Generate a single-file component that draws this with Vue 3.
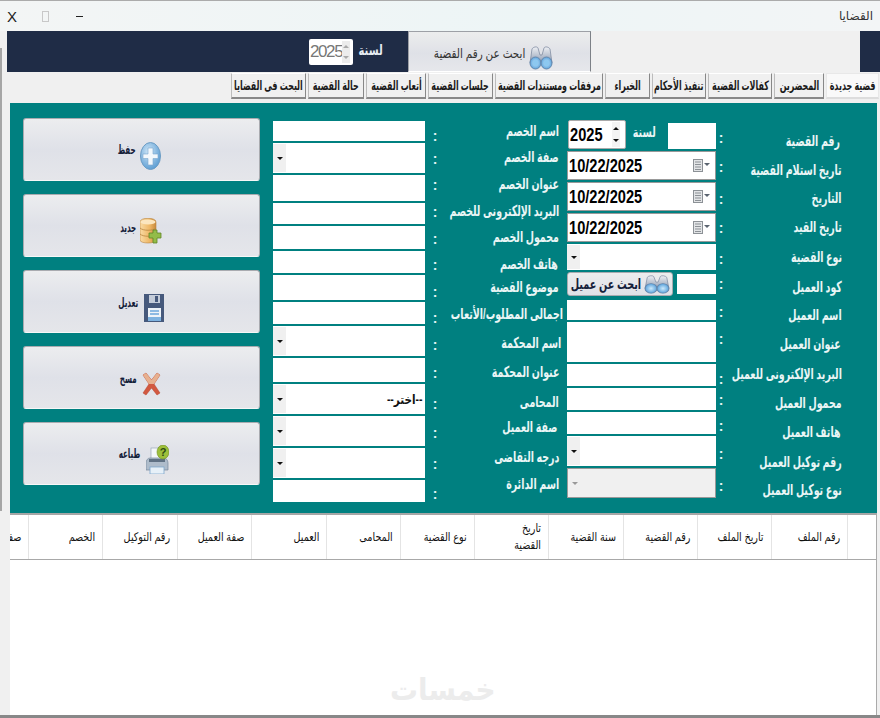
<script setup>
const tabs = [
  { t: 'البحث فى القضايا', w: 75 }, { t: 'حالة القضية', w: 56 }, { t: 'أتعاب القضية', w: 60 },
  { t: 'جلسات القضية', w: 65 }, { t: 'مرفقات ومستندات القضية', w: 108 }, { t: 'الخبراء', w: 45 },
  { t: 'تنفيذ الأحكام', w: 54 }, { t: 'كفالات القضية', w: 64 }, { t: 'المحضرين', w: 50 },
  { t: 'قضية جديدة', w: 53, active: true }
]
const withHeights = (list, end) => list.map((x, i) => ({ ...x, h: (i + 1 < list.length ? list[i + 1].y : end) - x.y }))
const midLabels = withHeights([
  { t: 'اسم الخصم', y: 131 }, { t: 'صفة الخصم', y: 157 }, { t: 'عنوان الخصم', y: 184 },
  { t: 'البريد الإلكترونى للخصم', y: 211 }, { t: 'محمول الخصم', y: 237 }, { t: 'هاتف الخصم', y: 264, r: 1 },
  { t: 'موضوع القضية', y: 287 }, { t: 'اجمالى المطلوب/الأتعاب', y: 314, r: -4 }, { t: 'اسم المحكمة', y: 343, r: -2 },
  { t: 'عنوان المحكمة', y: 372 }, { t: 'المحامى', y: 402 }, { t: 'صفة العميل', y: 427, r: 2 },
  { t: 'درجه التقاضى', y: 457 }, { t: 'اسم الدائرة', y: 484 }
], 504)
const rightLabels = withHeights([
  { t: 'رقم القضية', y: 141, r: 2 }, { t: 'تاريخ استلام القضية', y: 170 }, { t: 'التاريخ', y: 198 },
  { t: 'تاريخ القيد', y: 227 }, { t: 'نوع القضية', y: 257 }, { t: 'كود العميل', y: 287 },
  { t: 'اسم العميل', y: 315 }, { t: 'عنوان العميل', y: 344, r: 1 }, { t: 'البريد الإلكترونى للعميل', y: 374 },
  { t: 'محمول العميل', y: 403 }, { t: 'هاتف العميل', y: 432, r: 1 }, { t: 'رقم توكيل العميل', y: 462 },
  { t: 'نوع توكيل العميل', y: 490 }
], 510)
const midColons = withHeights([134, 157, 183, 210, 237, 263, 290, 316, 343, 371, 402, 431, 462, 492].map(y => ({ y })), 504)
const rightColons = withHeights([136, 165, 197, 226, 257, 282, 310, 337, 377, 398, 424, 452, 484].map(y => ({ y })), 504)
const midFields = [
  { h: 20 }, { h: 30, combo: true }, { h: 26 }, { h: 21 }, { h: 23 }, { h: 22 }, { h: 25 },
  { h: 22 }, { h: 30, combo: true }, { h: 24 }, { h: 30, combo: true, text: '--اختر--' },
  { h: 30, combo: true }, { h: 30, combo: true }, { h: 22 }
]
const cols = [
  { w: 29 }, { w: 76, t: 'رقم الملف' }, { w: 74, t: 'تاريخ الملف' }, { w: 74, t: 'رقم القضية' },
  { w: 75, t: 'سنة القضية' }, { w: 74, t: 'تاريخ القضية', wrap: true }, { w: 74, t: 'نوع القضية' },
  { w: 74, t: 'المحامى' }, { w: 75, t: 'العميل' }, { w: 74, t: 'صفة العميل' }, { w: 75, t: 'رقم التوكيل' },
  { w: 74, t: 'الخصم' }, { w: 74, t: 'صفة العميل' }
]
</script>

<template>
  <div class="win">
    <div class="titlebar">
      <span class="ctl-x">X</span>
      <span class="ctl-sq"></span>
      <span class="ctl-min"></span>
      <span class="title">القضايا</span>
    </div>

    <div class="band">
      <div class="navy navy-main">
        <div class="spin-top">
          <span class="spin-top-val">2025</span>
          <span class="spin-top-btns"><i class="up"></i><i class="down"></i></span>
        </div>
        <span class="year-top"><span class="sq">لسنة</span></span>
      </div>
      <div class="find-btn">
        <span class="find-text"><span class="sq">ابحث عن رقم القضية</span></span>
        <svg class="find-ico" width="24" height="24" viewBox="0 0 24 24">
          <defs>
            <linearGradient id="bn" x1="0" y1="0" x2="0" y2="1"><stop offset="0" stop-color="#eef0f4"/><stop offset="1" stop-color="#8d9ab0"/></linearGradient>
            <radialGradient id="lens"><stop offset="0" stop-color="#cde9fb"/><stop offset="1" stop-color="#5ba3dc"/></radialGradient>
          </defs>
          <path d="M3 3c1-2 5-3 6-1l2 7h2l2-7c1-2 5-1 6 1l2 14H1z" fill="url(#bn)" stroke="#75829a" stroke-width=".7"/>
          <ellipse cx="6.500" cy="17" rx="5.500" ry="6" fill="url(#lens)" stroke="#6487ad"/>
          <ellipse cx="17.500" cy="17" rx="5.500" ry="6" fill="url(#lens)" stroke="#6487ad"/>
          <ellipse cx="6.500" cy="17" rx="2.600" ry="3" fill="#8cc8f0"/>
          <ellipse cx="17.500" cy="17" rx="2.600" ry="3" fill="#8cc8f0"/>
        </svg>
      </div>
      <div class="band-gap"></div>
      <div class="navy navy-end"></div>
    </div>

    <div class="tabs">
      <div v-for="tab in tabs" :key="tab.t" class="tab" :class="{ active: tab.active }" :style="{ width: tab.w + 'px' }">
        <span class="sq sq-c">{{ tab.t }}</span>
      </div>
    </div>

    <div class="panel">
      <div class="actions">
        <div class="act">
          <span class="act-text t31"><span class="sq sqa">حفظ</span></span>
          <svg class="i24" width="21" height="28" viewBox="0 0 21 28">
            <defs><radialGradient id="pl" cx=".4" cy=".35" r=".75"><stop offset="0" stop-color="#cfe6f7"/><stop offset="1" stop-color="#4f95cf"/></radialGradient></defs>
            <ellipse cx="10.500" cy="14" rx="10" ry="13.500" fill="url(#pl)" stroke="#6c9cc4"/>
            <path d="M8 6h5v6h5v4.500h-5V23H8v-6.500H3V12h5z" fill="#f3f8fc" stroke="#7aa6cc" stroke-width=".6"/>
          </svg>
        </div>
        <div class="act">
          <span class="act-text t33"><span class="sq sqa">جديد</span></span>
          <svg class="i24" width="22" height="27" viewBox="0 0 22 27">
            <defs><linearGradient id="db" x1="0" x2="1"><stop offset="0" stop-color="#f9dba4"/><stop offset=".6" stop-color="#eeb766"/><stop offset="1" stop-color="#c98a3c"/></linearGradient></defs>
            <path d="M0 4c0-5 16-5 16 0v18c0 4-16 4-16 0z" fill="url(#db)" stroke="#b9853f" stroke-width=".6"/>
            <path d="M0 10c3 3 13 3 16 0M0 16c3 3 13 3 16 0" fill="none" stroke="#b9853f" stroke-width=".8"/>
            <ellipse cx="8" cy="4" rx="7.500" ry="2.500" fill="#fbe6bf"/>
            <path d="M13 12h4v3h4v5h-4v5h-4v-5H9v-5h4z" fill="#93bc48" stroke="#5f8526" stroke-width=".8"/>
          </svg>
        </div>
        <div class="act">
          <span class="act-text t32 s2"><span class="sq sqa">تعديل</span></span>
          <svg class="i24 shift3" width="20" height="28" viewBox="0 0 20 28">
            <rect width="20" height="28" fill="#46597c"/>
            <rect x="5" y="1" width="11" height="8" fill="#c4ccd9"/>
            <rect x="11" y="2" width="3" height="6" fill="#46597c"/>
            <rect x="4" y="14" width="13" height="13" fill="#eef3f8"/>
            <path d="M6 17h9M6 20h9" stroke="#6ea8db" stroke-width="1.500"/>
            <rect x="4" y="23" width="13" height="4" fill="#7eb2e0"/>
          </svg>
        </div>
        <div class="act">
          <span class="act-text t32 s1"><span class="sq sqa">مسح</span></span>
          <svg class="i24 shift2" width="19" height="24" viewBox="0 0 19 24">
            <path d="M1 3l3-2 5.500 7L15 1l3 2-6 9 6 9-3 2-5.500-7L4 23l-3-2 6-9z" fill="#d2583f" stroke="#b5442e" stroke-width=".5"/>
            <path d="M1 3l3-2 5.500 7L15 1l3 2-6 9H7z" fill="#e7b08f"/>
          </svg>
        </div>
        <div class="act">
          <span class="act-text t31 s4"><span class="sq sqa">طباعه</span></span>
          <svg class="i24 shift3 u1" width="23" height="29" viewBox="0 0 23 29">
            <rect x="5" y="3" width="12" height="12" fill="#f4f7fa" stroke="#9aa8b8" stroke-width=".7"/>
            <path d="M0 18c0-3 2-5 4-5h14c2 0 4 2 4 5v7H0z" fill="#aebccb" stroke="#77889b" stroke-width=".7"/>
            <rect x="3" y="14" width="16" height="3" fill="#5f7184"/>
            <rect x="4" y="22" width="14" height="7" fill="#e6f0f8" stroke="#7fa7cb" stroke-width=".8"/>
            <ellipse cx="17" cy="7" rx="6" ry="7" fill="#9dbf3a" stroke="#6f8f1f" stroke-width=".6"/>
            <text x="17" y="11" font-size="11" font-weight="700" text-anchor="middle" fill="#2c4a12" font-family="Liberation Sans">?</text>
          </svg>
        </div>
      </div>

      <div class="fields mid">
        <div v-for="(f, i) in midFields" :key="i" class="field" :class="{ combo: f.combo }" :style="{ height: f.h + 'px' }">
          <span v-if="f.combo" class="strip"><i class="down dk"></i></span>
          <span v-if="f.text" class="field-text"><span class="sq">{{ f.text }}</span></span>
        </div>
      </div>

      <div class="colons c-mid">
        <div v-for="c in midColons" :key="c.y" class="colon" :style="{ height: c.h + 'px' }">:</div>
      </div>

      <div class="labels l-mid">
        <div v-for="l in midLabels" :key="l.t" class="label" :style="{ height: l.h + 'px', paddingRight: 4 + (l.r || 0) + 'px' }">
          <span class="sq">{{ l.t }}</span>
        </div>
      </div>

      <div class="fields right">
        <div class="f-row r1">
          <div class="spin">
            <span class="big"><span class="sql">2025</span></span>
            <span class="spin-btns"><i class="up dk"></i><i class="down dk"></i></span>
          </div>
          <span class="year"><span class="sq">لسنة</span></span>
          <div class="field caseno"></div>
        </div>
        <div v-for="n in 3" :key="n" class="date">
          <span class="big"><span class="sql">10/22/2025</span></span>
          <svg class="cal" width="17" height="13" viewBox="0 0 17 13">
            <rect x="0.500" y=".5" width="9" height="12" fill="#e2e4e6" stroke="#8c9196"/>
            <path d="M2 3h6M2 5.500h6M2 8h6M2 10.500h6" stroke="#8c9196"/>
            <path d="M11 4h6l-3 3z" fill="#5b6470"/>
          </svg>
        </div>
        <div class="field combo" style="height: 26px"><span class="strip"><i class="down dk"></i></span></div>
        <div class="f-row r6">
          <div class="client-btn">
            <span class="client-text"><span class="sq">ابحث عن عميل</span></span>
            <svg width="26" height="19" viewBox="0 0 24 24" preserveAspectRatio="none">
              <path d="M3 3c1-2 5-3 6-1l2 7h2l2-7c1-2 5-1 6 1l2 14H1z" fill="url(#bn)" stroke="#75829a" stroke-width=".7"/>
              <ellipse cx="6.500" cy="17" rx="5.500" ry="6" fill="url(#lens)" stroke="#6487ad"/>
              <ellipse cx="17.500" cy="17" rx="5.500" ry="6" fill="url(#lens)" stroke="#6487ad"/>
            </svg>
          </div>
          <div class="field code"></div>
        </div>
        <div class="field gapt" style="height: 20px"></div>
        <div class="field" style="height: 40px"></div>
        <div class="field" style="height: 22px"></div>
        <div class="field" style="height: 22px"></div>
        <div class="field" style="height: 22px"></div>
        <div class="field combo" style="height: 30px"><span class="strip"><i class="down dk"></i></span></div>
        <div class="field combo off" style="height: 30px"><span class="strip blank"><i class="down gr"></i></span></div>
      </div>

      <div class="colons c-right">
        <div v-for="c in rightColons" :key="c.y" class="colon" :style="{ height: c.h + 'px' }">:</div>
      </div>

      <div class="labels l-right">
        <div v-for="l in rightLabels" :key="l.t" class="label" :style="{ height: l.h + 'px', paddingRight: 4 + (l.r || 0) + 'px' }">
          <span class="sq">{{ l.t }}</span>
        </div>
      </div>
    </div>

    <div class="grid">
      <div class="grid-head">
        <div v-for="(c, i) in cols" :key="i" class="th" :style="{ width: c.w + 'px' }">
          <span class="sq" :class="{ wrap: c.wrap }">{{ c.t }}</span>
        </div>
      </div>
      <div class="grid-body">
        <span class="mark"><span class="sq sq-c">خمسات</span></span>
      </div>
    </div>
    <div class="foot"></div>
    <div class="edge"></div>
  </div>
</template>

<style>
html, body { margin: 0; padding: 0; background: #f0f0f0; }
</style>

<style scoped>
.win {
  position: relative;
  width: 880px;
  height: 718px;
  overflow: hidden;
  background: #f0f0f0;
  display: flex;
  flex-direction: column;
  font-family: "Liberation Sans", "DejaVu Sans", sans-serif;
  border-top: 1px solid #ababab;
  box-sizing: border-box;
}
.sq { display: inline-block; transform: scaleX(.8); transform-origin: right center; white-space: nowrap; direction: rtl; }
.sql { display: inline-block; transform: scaleX(.77); transform-origin: left center; white-space: nowrap; }
.sqa { transform: scaleX(.55); }

.titlebar {
  height: 30px; flex: none; display: flex; align-items: center; padding-left: 7px;
  background: linear-gradient(90deg, #f3f5f5, #edf5f6 60%, #f3f5f6);
}
.ctl-x { font: 15px "Liberation Sans", sans-serif; color: #222; width: 35px; }
.ctl-sq { width: 5px; height: 9px; border: 1px solid #c8c8c8; margin-right: 27px; }
.ctl-min { width: 7px; height: 1px; background: #222; }
.title { margin-left: auto; margin-right: 7px; font-size: 12px; color: #333; direction: rtl; }

.band { height: 41px; flex: none; display: flex; padding-left: 7px; }
.navy { background: #1f2c46; }
.navy-main { width: 401px; display: flex; align-items: flex-start; padding-top: 8px; padding-left: 302px; box-sizing: border-box; }
.spin-top { width: 44px; height: 26px; background: #fff; border-radius: 2px; display: flex; align-items: center; justify-content: space-between; box-sizing: border-box; padding: 0 3px 0 1px; }
.spin-top-val { font-size: 17px; color: #777; letter-spacing: -1.4px; }
.spin-top-btns { display: flex; flex-direction: column; width: 12px; height: 22px; background: #ececec; align-items: center; justify-content: space-around; }
.year-top { width: 30px; text-align: right; direction: rtl; color: #e6edf3; font-size: 14px; font-weight: 700; padding-top: 3px; }
.year-top .sq { transform: scaleX(.72); }
.find-btn {
  width: 183px; display: flex; box-sizing: border-box; padding: 14px 0 0 39px; gap: 4px; align-items: flex-start;
  background: linear-gradient(#eceded, #dfe1e7 55%, #e6e7eb); border: 1px solid #9da0a6; border-bottom-color: #fff; border-right-color: #7d8187;
}
.find-text { width: 77px; font-size: 13px; text-align: right; direction: rtl; color: #333; }
.band-gap { width: 269px; }
.navy-end { width: 20px; }

.up, .down { display: block; width: 0; height: 0; border-left: 3px solid transparent; border-right: 3px solid transparent; }
.up { border-bottom: 3px solid #aaa; }
.down { border-top: 3px solid #aaa; }
.up.dk { border-bottom-color: #111; }
.down.dk { border-top-color: #111; }
.down.gr { border-top-color: #999; }

.tabs { height: 27px; flex: none; display: flex; justify-content: flex-end; gap: 2px; padding-right: 1px; margin-top: 1px; box-sizing: border-box; }
.tab {
  box-sizing: border-box; height: 26px; display: flex; align-items: center; justify-content: center; direction: rtl; overflow: hidden;
  background: #f0f0f0; border: 1px solid #fff; border-right-color: #888; border-bottom: 2px solid #888; border-left-color: #bcbcbc;
  font-size: 13px; font-weight: 700; color: #1a1a1a;
}
.tab .sq { transform: scaleX(.61); flex: none; }
.sq-c { transform-origin: center; }
.tab.active { background: #f9f9f9; border-color: #e8e8e8; border-bottom-color: #ddd; }

.panel {
  flex: none; margin: 3px 0 0 10px; width: 867px; height: 410px; background: #008080; display: flex;
  border-bottom: 2px solid #a6a6a6; box-sizing: content-box;
}
.actions { width: 237px; margin-left: 13px; padding-top: 15px; display: flex; flex-direction: column; gap: 13px; flex: none; }
.act {
  height: 63px; box-sizing: border-box; display: flex; align-items: flex-start; gap: 4px; padding-top: 23px;
  background: linear-gradient(#ecedef, #dfe1e8 50%, #e5e6ea); border: 1px solid #a9abb0; border-bottom-color: #f7f7f7; border-radius: 3px;
}
.act-text { width: 112px; text-align: right; direction: rtl; font-size: 13px; font-weight: 700; color: #14203a; line-height: 14px; }
.t31 { margin-top: 1px; } .t33 { margin-top: 3px; } .t32 { margin-top: 2px; }
.s1 { width: 113px; } .s2 { width: 114px; } .s4 { width: 116px; }
.shift2 { margin-left: 1px; margin-top: 2px; } .shift3 { margin-left: 2px; } .u1 { margin-top: -1px; }
.i24 { flex: none; }

.fields { display: flex; flex-direction: column; gap: 2px; flex: none; }
.mid { width: 152px; margin-left: 13px; padding-top: 18px; }
.field { background: #fff; position: relative; box-sizing: border-box; flex: none; }
.combo { display: flex; align-items: center; }
.strip { width: 13px; align-self: stretch; margin: 1px 0; background: #f0f0f0; display: flex; align-items: center; justify-content: center; flex: none; }
.strip.blank { background: transparent; }
.field-text { margin-left: auto; margin-right: 2px; font-size: 13px; font-weight: 700; color: #111; direction: rtl; }
.field.off { background: #f0f0f0; border: 1px solid #999; }

.colons { flex: none; text-align: center; color: #e6f3f3; font-weight: 700; font-size: 14px; }
.colon { line-height: 14px; }
.c-mid { width: 10px; margin-left: 5px; padding-top: 26px; }
.c-right { width: 10px; padding-top: 28px; }
.labels { flex: none; color: #e9f5f5; font-weight: 700; font-size: 15px; direction: rtl; text-align: right; }
.labels .sq { transform: scaleX(.63); }
.label { line-height: 20px; box-sizing: border-box; }
.l-mid { width: 123px; padding-top: 18px; }
.l-right { width: 120px; padding-top: 28px; }

.right { width: 149px; margin-left: 4px; padding-top: 17px; }
.f-row { display: flex; align-items: center; flex: none; }
.r1 { height: 29px; }
.spin { width: 58px; height: 29px; margin-left: 1px; background: #fff; box-sizing: border-box; border: 1px solid #aaa; border-radius: 2px; display: flex; align-items: center; justify-content: space-between; padding: 0 5px 0 1px; flex: none; }
.big { font-size: 19px; font-weight: 700; color: #000; line-height: 20px; }
.spin-btns { display: flex; flex-direction: column; width: 11px; height: 25px; justify-content: space-around; align-items: center; background: #f4f4f4; }
.year { width: 25px; margin-left: 5px; text-align: right; direction: rtl; color: #e9f5f5; font-size: 14px; font-weight: 700; margin-top: -6px; flex: none; }
.year .sq { transform: scaleX(.68); }
.caseno { width: 48px; height: 26px; margin-left: 12px; margin-top: 3px; }
.date { height: 29px; box-sizing: border-box; background: #fff; border: 1px solid #999; display: flex; align-items: center; justify-content: space-between; padding: 0 5px 0 1px; flex: none; }
.r6 { height: 24px; justify-content: space-between; }
.client-btn { width: 106px; height: 24px; box-sizing: border-box; border: 1px solid #a9abb0; border-radius: 3px; background: linear-gradient(#eceded, #dfe1e7); display: flex; align-items: center; justify-content: flex-end; padding-right: 2px; gap: 3px; }
.client-text { width: 70px; text-align: right; direction: rtl; font-size: 14px; font-weight: 700; color: #14203a; flex: none; }
.client-text .sq { transform: scaleX(.69); }
.code { width: 39px; height: 20px; }
.gapt { margin-top: 2px; }

.grid { flex: 1; margin-left: 10px; width: 866px; background: #fff; display: flex; flex-direction: column; border-right: 1px solid #aaa; box-sizing: content-box; min-height: 0; }
.grid-head { height: 44px; flex: none; display: flex; direction: rtl; overflow: hidden; border-bottom: 1px solid #a8a8a8; }
.th { flex: none; box-sizing: border-box; border-left: 1px solid #e4e4e4; display: flex; align-items: center; padding: 0 7px; font-size: 12px; color: #111; }
.wrap { white-space: normal; width: 46px; line-height: 17px; text-align: right; }
.grid-body { flex: 1; display: flex; justify-content: center; align-items: flex-end; }
.mark { font-size: 30px; line-height: 36px; font-weight: 700; color: #ececec; direction: rtl; margin-bottom: 7px; }
.mark .sq { transform: scaleX(.93); }
.foot { height: 3px; flex: none; background: #888; }
.edge { position: absolute; left: 0; top: 47px; width: 2px; height: 463px; background: #a6a6a6; }
</style>
